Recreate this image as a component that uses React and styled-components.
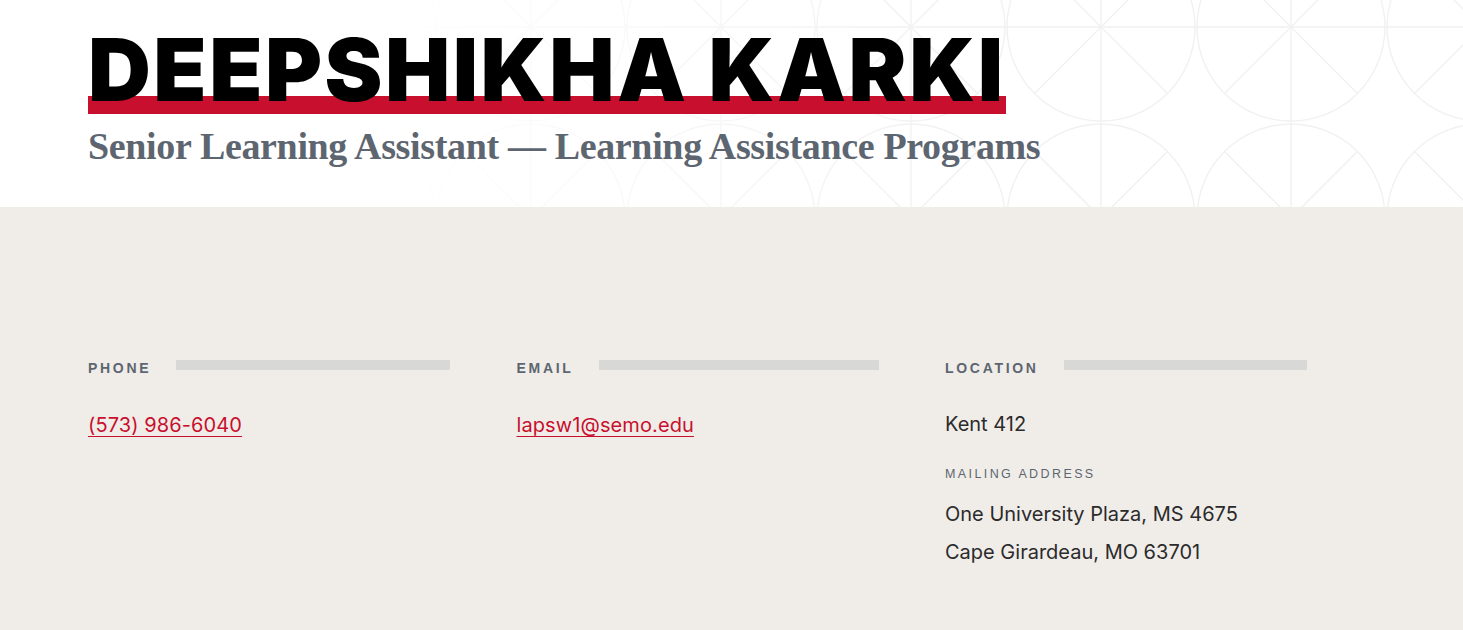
import React from "react"
import styled, { createGlobalStyle } from "styled-components"

const GlobalStyle = createGlobalStyle`
  html, body {
    margin: 0;
    padding: 0;
    background: #f0ede9;
  }
  body {
    font-family: Inter, "Liberation Sans", sans-serif;
  }
`

const Header = styled.header`
  position: relative;
  height: 207px;
  background: #ffffff;
  overflow: hidden;
  box-sizing: border-box;
  padding: 26px 88px 0;
`

const Pattern = styled.svg`
  position: absolute;
  inset: 0;
  width: 100%;
  height: 100%;
  -webkit-mask-image: linear-gradient(to right, transparent 25%, #000 65%);
  mask-image: linear-gradient(to right, transparent 25%, #000 65%);
`

const HeaderContent = styled.div`
  position: relative;
  display: flex;
  flex-direction: column;
  align-items: flex-start;
`

const Name = styled.h1`
  margin: 0;
  font-family: Inter, "Liberation Sans", sans-serif;
  font-weight: 900;
  font-size: 87px;
  line-height: 1;
  letter-spacing: 2.5px;
  color: #000;
  text-transform: uppercase;
  background-image: linear-gradient(#c8102e, #c8102e);
  background-repeat: no-repeat;
  background-size: calc(100% + 2px) 18px;
  background-position: 0 100%;
  padding-bottom: 1px;
`

const Title = styled.h2`
  margin: 12px 0 0;
  font-family: "Liberation Serif", serif;
  font-weight: 700;
  font-size: 38px;
  line-height: 1.1;
  letter-spacing: -0.35px;
  color: #5d6670;
`

const Details = styled.section`
  display: grid;
  grid-template-columns: repeat(3, 362px);
  column-gap: 66.5px;
  padding: 153px 88px 60px;
`

const Column = styled.div`
  display: flex;
  flex-direction: column;
`

const LabelRow = styled.div`
  display: flex;
  align-items: flex-start;
  gap: 25px;
  margin-bottom: 37px;
`

const Label = styled.span`
  font-family: "Liberation Sans", sans-serif;
  font-weight: 700;
  font-size: 14px;
  line-height: 16px;
  letter-spacing: 2.7px;
  color: #5d6670;
  text-transform: uppercase;
`

const Rule = styled.span`
  flex: 1;
  height: 10px;
  background: #d8d8d6;
`

const LinkValue = styled.a`
  align-self: flex-start;
  font-size: 20px;
  line-height: 24px;
  letter-spacing: 0.1px;
  color: #c8102e;
  text-decoration: underline;
  text-underline-offset: 4px;
  text-decoration-thickness: 1px;
`

const Value = styled.div`
  font-size: 20px;
  line-height: 38px;
  color: #2b2b2b;
  margin-top: ${(p) => p.$offset || 0}px;
`

const SubLabel = styled.div`
  font-family: "Liberation Sans", sans-serif;
  font-size: 12.5px;
  letter-spacing: 2.4px;
  color: #5d6670;
  text-transform: uppercase;
  margin: 24px 0 14px;
`

const TileGraphic = () => (
  <Pattern aria-hidden="true">
    <defs>
      <pattern id="tile" x="56" y="-68" width="190" height="191" patternUnits="userSpaceOnUse">
        <g fill="none" stroke="#f1f1f1" strokeWidth="1.4">
          <circle cx="95" cy="95" r="94" />
          <line x1="0" y1="95" x2="190" y2="95" />
          <line x1="95" y1="0" x2="95" y2="191" />
          <line x1="28.5" y1="28.5" x2="161.5" y2="161.5" />
          <line x1="161.5" y1="28.5" x2="28.5" y2="161.5" />
        </g>
      </pattern>
    </defs>
    <rect width="100%" height="100%" fill="url(#tile)" />
  </Pattern>
)

const contacts = [
  { label: "Phone", link: "(573) 986-6040", href: "tel:5739866040" },
  { label: "Email", link: "lapsw1@semo.edu", href: "mailto:lapsw1@semo.edu" },
]

const App = () => {
  return (
    <>
      <GlobalStyle />
      <Header>
        <TileGraphic />
        <HeaderContent>
          <Name>Deepshikha Karki</Name>
          <Title>Senior Learning Assistant — Learning Assistance Programs</Title>
        </HeaderContent>
      </Header>
      <Details>
        {contacts.map((c) => (
          <Column key={c.label}>
            <LabelRow>
              <Label>{c.label}</Label>
              <Rule />
            </LabelRow>
            <LinkValue href={c.href}>{c.link}</LinkValue>
          </Column>
        ))}
        <Column>
          <LabelRow>
            <Label>Location</Label>
            <Rule />
          </LabelRow>
          <Value $offset={-8}>Kent 412</Value>
          <SubLabel>Mailing Address</SubLabel>
          <Value>One University Plaza, MS 4675</Value>
          <Value>Cape Girardeau, MO 63701</Value>
        </Column>
      </Details>
    </>
  )
}

export default App
